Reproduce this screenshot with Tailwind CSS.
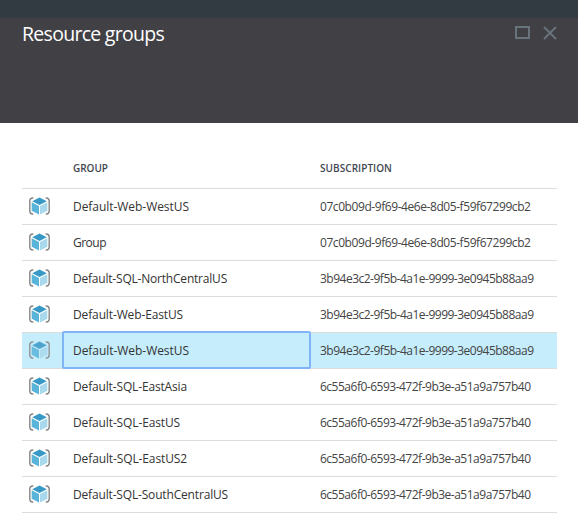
<!DOCTYPE html>
<html lang="en">
<head>
<meta charset="utf-8">
<title>Resource groups</title>
<script src="https://cdn.jsdelivr.net/npm/@tailwindcss/browser@4"></script>
</head>
<body class="w-[578px] h-[519px] overflow-hidden bg-white font-['Open_Sans','Noto_Sans',sans-serif]">
<svg class="hidden">
  <symbol id="group" viewBox="0 0 21 18">
    <path d="M4.3 1H3.2Q.8 1.6 .8 4V14Q.8 16.4 3.2 17H4.3M16.7 1H17.8Q20.2 1.6 20.2 4V14Q20.2 16.4 17.8 17H16.7" fill="none" stroke="#858585" stroke-width="1.4"/>
    <path d="M10.5 .6 17.8 4.3 10.5 8 3.2 4.3Z" fill="#3999c6"/>
    <path d="M2.7 5.3 10 9V17.6L2.7 13.7Z" fill="#59b4d9"/>
    <path d="M18.3 5.3 11 9V17.6L18.3 13.7Z" fill="#a8d8ec"/>
  </symbol>
</svg>
<div class="h-[18px] bg-[#323a42]"></div>
<header class="flex h-[105px] items-start justify-between bg-[#404045] pl-[22px] pr-[21px] pt-[3px]">
  <h1 class="whitespace-nowrap text-[19.5px] leading-[26px] text-white"><span data-width="142" data-font="400 19.5px">Resource groups</span></h1>
  <div class="flex gap-[13px] pt-[5px] text-[#68737c]">
    <svg class="h-[14px] w-[15px]" viewBox="0 0 15 14" fill="none" stroke="currentColor" stroke-width="2"><path d="M1 1H14V12H1Z"/></svg>
    <svg class="h-[14px] w-[14px]" viewBox="0 0 14 14" fill="none" stroke="currentColor" stroke-width="2"><path d="M1 1 13 13M13 1 1 13"/></svg>
  </div>
</header>
<main class="pl-[22px] pr-[21px] pt-[28px]">
  <div class="grid h-[38px] grid-cols-[51px_247px_1fr] border-b border-[#dcdcdc] text-[10px] font-semibold leading-[34px] text-[#3f474f]">
    <div></div>
    <div><span data-width="35" data-font="600 10px">GROUP</span></div>
    <div><span data-width="72" data-font="600 10px">SUBSCRIPTION</span></div>
  </div>
  <div id="rows"></div>
</main>
<template id="row">
  <div class="grid h-9 grid-cols-[40px_249px_1fr] whitespace-nowrap border-b border-[#dcdcdc] text-[12px] leading-[35px] text-[#333333]">
    <div class="pl-[7px] pt-[8px]"><svg class="h-[18px] w-[21px]"><use href="#group"/></svg></div>
    <div class="cell pl-[11px]"><span></span></div>
    <div class="pl-[9px] text-[#444444]"><span></span></div>
  </div>
</template>
<script>
const A = ['07c0b09d-9f69-4e6e-8d05-f59f67299cb2', 210.5];
const B = ['3b94e3c2-9f5b-4a1e-9999-3e0945b88aa9', 213.5];
const C = ['6c55a6f0-6593-472f-9b3e-a51a9a757b40', 210.5];
const data = [
  ['Default-Web-WestUS', 116, A], ['Group', 33, A],
  ['Default-SQL-NorthCentralUS', 154, B], ['Default-Web-EastUS', 110, B],
  ['Default-Web-WestUS', 116, B, true], ['Default-SQL-EastAsia', 114, C],
  ['Default-SQL-EastUS', 107, C], ['Default-SQL-EastUS2', 114, C],
  ['Default-SQL-SouthCentralUS', 155, C]
];
for (const [name, width, sub, selected] of data) {
  const row = document.getElementById('row').content.cloneNode(true).firstElementChild;
  const [n, s] = row.querySelectorAll('span');
  n.textContent = name; n.dataset.width = width;
  s.textContent = sub[0]; s.dataset.width = sub[1];
  if (selected) {
    row.classList.add('bg-[#c5edfb]');
    row.querySelector('svg').classList.add('opacity-85');
    row.querySelector('.cell').classList.add('relative', 'before:absolute', 'before:-top-[2px]', 'before:left-0', 'before:h-[38px]', 'before:w-[249px]', 'before:rounded-[2px]', 'before:border-2', 'before:border-[#80b3f7]');
  }
  document.getElementById('rows').append(row);
}
const ctx = document.createElement('canvas').getContext('2d');
for (const el of document.querySelectorAll('[data-width]')) {
  ctx.font = (el.dataset.font || '400 12px') + ' "Open Sans"';
  const natural = ctx.measureText(el.textContent).width;
  el.style.letterSpacing = ((+el.dataset.width - natural) / el.textContent.length) + 'px';
}
</script>
</body>
</html>
